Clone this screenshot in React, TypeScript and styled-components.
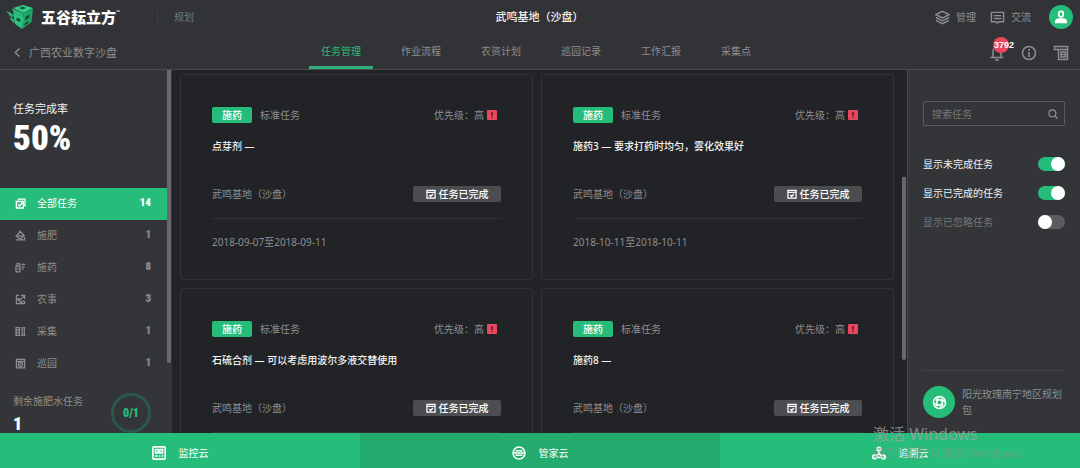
import React from "react";
import styled, { createGlobalStyle } from "styled-components";

const color = {
  panel: "#343538",
  header: "#323336",
  canvas: "#222326",
  line: "#4b4c4f",
  faint: "#313235",
  muted: "#8d8e90",
  dim: "#77787a",
  green: "#25bd79",
  red: "#e8475f",
};

const numberFont = 'Impact, "Roboto Condensed", Roboto, sans-serif';

const GlobalStyle = createGlobalStyle`
  * { box-sizing: border-box; }
  body {
    margin: 0;
    background: ${color.canvas};
    color: ${color.muted};
    font: 10px/16px "Noto Sans", "Noto Sans CJK SC", sans-serif;
  }
  button, input { font: inherit; color: inherit; }
  button { border: 0; padding: 0; background: none; cursor: pointer; }
  a { color: inherit; text-decoration: none; }
  h1, h2, p, ul { margin: 0; padding: 0; font: inherit; }
  svg { display: block; flex: none; }
`;

const Page = styled.div`
  display: flex;
  flex-direction: column;
  height: 100vh;
  overflow: hidden;
  position: relative;
`;

const Header = styled.header`
  background: ${color.header};
  border-bottom: 1px solid ${color.line};
`;

const TopBar = styled.div`
  display: grid;
  grid-template-columns: 1fr auto 1fr;
  align-items: center;
  height: 34px;
  padding: 0 7px 0 6px;
`;

const Brand = styled.div`
  display: flex;
  align-items: center;
`;

const BrandName = styled.span`
  margin-left: 7px;
  color: #fff;
  font-size: 15px;
  font-weight: 900;
  line-height: 24px;
`;

const Trademark = styled.sup`
  align-self: flex-start;
  margin-top: 3px;
  color: #fff;
  font-size: 5px;
  line-height: 8px;
`;

const BrandLink = styled.a`
  margin-left: 37px;
  padding-left: 16px;
  border-left: 1px solid #3d3e41;
  color: ${color.dim};
  line-height: 12px;
`;

const PageTitle = styled.h1`
  color: #f2f2f2;
  font-size: 11px;
  font-weight: 500;
`;

const TopActions = styled.div`
  display: flex;
  align-items: center;
  justify-content: flex-end;
  gap: 14px;
`;

const IconText = styled.button`
  display: flex;
  align-items: center;
  gap: 6px;
`;

const Avatar = styled.button`
  display: grid;
  place-items: center;
  width: 24px;
  height: 24px;
  margin-left: 4px;
  border-radius: 50%;
  background: ${color.green};
`;

const SubBar = styled.div`
  display: grid;
  grid-template-columns: 1fr auto 1fr;
  height: 35px;
  padding: 0 11px;
`;

const BackLink = styled.a`
  display: flex;
  align-items: center;
  gap: 7px;
  padding: 2px 0 0 2px;
  font-size: 11px;
`;

const Tabs = styled.nav`
  display: flex;
  gap: 16px;
  margin-right: 8px;
`;

const Tab = styled.button<{ $active?: boolean }>`
  padding: 2px 12px 0;
  border-bottom: 3px solid ${(p) => (p.$active ? "#2fae7c" : "transparent")};
  color: ${(p) => (p.$active ? color.green : color.muted)};
`;

const Tools = styled.div`
  display: flex;
  align-items: center;
  justify-content: flex-end;
  gap: 16px;
  padding-top: 2px;
`;

const Tool = styled.button`
  position: relative;
`;

const Count = styled.span`
  position: absolute;
  top: -8px;
  left: 4px;
  width: 16px;
  height: 16px;
  padding-left: 1px;
  border-radius: 50%;
  background: ${color.red};
  color: #fff;
  font: bold 9px/16px "Liberation Sans", sans-serif;
`;

const Body = styled.div`
  display: flex;
  flex: 1;
  min-height: 0;
`;

const Sidebar = styled.aside`
  display: flex;
  flex: none;
  width: 172px;
  background: ${color.panel};
`;

const SideContent = styled.div`
  flex: 1;
  overflow: hidden;
`;

const ScrollTrack = styled.div<{ $top: number; $size: number }>`
  flex: none;
  width: 4px;
  margin-right: 1px;
  padding-top: ${(p) => p.$top}px;
  &::before {
    content: "";
    display: block;
    height: ${(p) => p.$size}px;
    border-radius: 0 0 2px 2px;
    background: #68696c;
  }
`;

const Rate = styled.section`
  padding: 31px 13px 31px;
  color: #f2f2f2;
  font-size: 11px;
`;

const RateValue = styled.p`
  padding-top: 4px;
  color: #fff;
  font: 900 35px/36px ${numberFont};
`;

const TaskType = styled.button<{ $active?: boolean }>`
  display: flex;
  align-items: center;
  gap: 11px;
  width: 100%;
  height: 32px;
  padding: 0 16px 2px 15px;
  background: ${(p) => (p.$active ? color.green : "transparent")};
  color: ${(p) => (p.$active ? "#fff" : color.muted)};
`;

const TypeCount = styled.span`
  margin-left: auto;
  font: 900 11px/16px ${numberFont};
`;

const Remaining = styled.section`
  display: flex;
  justify-content: space-between;
  padding: 13px 16px 0 13px;
`;

const RemainingValue = styled.p`
  margin-top: 3px;
  color: #fff;
  font: 900 18px/24px ${numberFont};
`;

const Ring = styled.div`
  display: grid;
  place-items: center;
  width: 40px;
  height: 40px;
  border: 3px solid #29584a;
  border-radius: 50%;
  color: ${color.green};
  font: 900 12px/16px ${numberFont};
`;

const Main = styled.main`
  display: flex;
  flex: 1;
  min-width: 0;
  overflow: hidden;
`;

const Cards = styled.div`
  display: grid;
  flex: 1;
  grid-template-columns: 1fr 1fr;
  align-content: start;
  gap: 8px;
  padding: 4px 8px;
`;

const Card = styled.article`
  padding: 32px 31px 29px;
  border: 1px solid ${color.faint};
  border-radius: 3px;
`;

const CardRow = styled.div`
  display: flex;
  align-items: center;
  height: 16px;
`;

const Badge = styled.span`
  width: 40px;
  margin-right: 8px;
  border-radius: 2px;
  background: ${color.green};
  color: #fff;
  font-weight: 500;
  text-align: center;
`;

const Priority = styled.span`
  display: flex;
  align-items: center;
  gap: 3px;
  margin-left: auto;
  padding-right: 4px;
`;

const CardTitle = styled.h2`
  margin: 15px 0 32px;
  color: #f4f4f4;
  font-weight: 500;
`;

const DoneButton = styled.button`
  display: flex;
  align-items: center;
  justify-content: center;
  gap: 3px;
  width: 88px;
  height: 16px;
  margin-left: auto;
  border-radius: 2px;
  background: #4c4d50;
  color: #fff;
  font-weight: 500;
`;

const Period = styled.p`
  margin-top: 16px;
  padding-top: 15px;
  border-top: 1px solid ${color.faint};
`;

const Filters = styled.aside`
  display: flex;
  flex: none;
  flex-direction: column;
  width: 173px;
  padding: 31px 15px 15px;
  border-left: 1px solid ${color.line};
  background: ${color.panel};
`;

const Search = styled.label`
  display: flex;
  align-items: center;
  height: 25px;
  margin-bottom: 23px;
  padding: 0 6px 0 8px;
  border: 1px solid #5a5b5e;
  border-radius: 2px;
`;

const SearchInput = styled.input`
  flex: 1;
  min-width: 0;
  padding: 0;
  border: 0;
  outline: 0;
  background: none;
  &::placeholder { color: ${color.dim}; }
`;

const Option = styled.label`
  display: flex;
  align-items: center;
  justify-content: space-between;
  height: 29px;
  color: ${color.dim};
  &:has(:checked) { color: #f2f2f2; }
`;

const Toggle = styled.input`
  appearance: none;
  display: flex;
  width: 27px;
  height: 14px;
  margin: 0;
  border-radius: 7px;
  background: #5b5c5f;
  &::before {
    content: "";
    width: 14px;
    height: 14px;
    border-radius: 50%;
    background: #fff;
  }
  &:checked {
    justify-content: flex-end;
    background: ${color.green};
  }
`;

const Plan = styled.a`
  display: flex;
  align-items: center;
  gap: 7px;
  margin-top: auto;
  padding-top: 15px;
  border-top: 1px solid #434447;
`;

const PlanIcon = styled.span`
  display: grid;
  flex: none;
  place-items: center;
  width: 32px;
  height: 32px;
  border-radius: 50%;
  background: ${color.green};
`;

const BottomNav = styled.nav`
  display: flex;
  flex: none;
  height: 35px;
`;

const NavItem = styled.a<{ $active?: boolean }>`
  display: flex;
  flex: 1;
  align-items: center;
  justify-content: center;
  gap: 13px;
  padding-top: 4px;
  background: ${(p) => (p.$active ? "#24ac6e" : color.green)};
  color: #fff;
`;

const Watermark = styled.div`
  position: absolute;
  right: 42px;
  bottom: 6px;
  width: 165px;
  color: rgba(130, 150, 140, 0.6);
  font-size: 12px;
  line-height: 16px;
  white-space: nowrap;
  pointer-events: none;
`;

const WatermarkTitle = styled.p`
  color: rgba(160, 162, 164, 0.75);
  font-size: 16px;
  line-height: 24px;
`;

type IconProps = { size?: number; width?: number; stroke?: string; children: React.ReactNode };

function Icon({ size = 10, width = 1.5, stroke = "currentColor", children }: IconProps) {
  return (
    <svg width={size} height={size} viewBox="0 0 16 16" fill="none" stroke={stroke} strokeWidth={width} aria-hidden="true">
      {children}
    </svg>
  );
}

function Logo() {
  return (
    <svg width="28" height="25" viewBox="0 0 28 25" aria-hidden="true">
      <path d="M7 3 17 0l10 3-9 5z" fill="#2fd189" />
      <path d="M6 3.500 17.500 8v4L8 9z" fill="#27b777" />
      <path d="M17.500 8.500 27 3.500 25.500 17 16 24z" fill="#1fa667" />
      <path d="M7 8l10.500 4L16 24l-7-5z" fill="#2ac47f" />
      <path d="M0 6l5 2 3 3-3 1 4 4-1 2-4-4 1-2z" fill="#27b777" />
      <path d="M13 3l4-1.500 3 1.500-3.500 1.500zM19.500 12l4-3-.5 4-4 2.500zM10.500 12.500l4 1.500v3l-4-1.500zM18.500 18.500l4-3-.5 3-3.500 2.500z" fill="#1b4b38" />
    </svg>
  );
}

const typeIcons: Record<string, React.ReactNode> = {
  all: (
    <>
      <path d="M5 4V1.500h9.500V11H12" />
      <path d="M2 5h10v9.500H2zM4.500 9.500l2 2 4-4.500" strokeWidth="2" />
    </>
  ),
  fertilize: (
    <>
      <path d="M1.500 9 8 2.500 13.500 8 8 13zM4 8.500h8M6 1l3 3" />
      <path d="M14 10v3M1 14.500h14" />
    </>
  ),
  spray: (
    <>
      <path d="M1.500 6H7v8.500H1.500zM3 6V2.500h4M7 2.500V6M3.500 10h2" />
      <path d="M9.500 3.500H15M9.500 7H14M9.500 10.500h3" />
    </>
  ),
  farm: (
    <>
      <path d="M6 2H2v12h12v-4M9 2h5v5" />
      <path d="M14 2 6 10M2 6l8 8M5 6l2 2M9 12l4-2" />
    </>
  ),
  collect: <path d="M1.500 2.500h5v11h-5zM1.500 6h5M1.500 10h5M9 2.500h1.500v11H9M12 2.500h3M13.500 2.500v11M12 13.500h3" />,
  patrol: (
    <>
      <path d="M2 2h12v12.500H2zM2 5h12" />
      <circle cx="8" cy="9.500" r="3" />
      <path d="M8 8v2" />
    </>
  ),
};

const taskTypes = [
  { icon: "all", label: "全部任务", count: 14, active: true },
  { icon: "fertilize", label: "施肥", count: 1 },
  { icon: "spray", label: "施药", count: 8 },
  { icon: "farm", label: "农事", count: 3 },
  { icon: "collect", label: "采集", count: 1 },
  { icon: "patrol", label: "巡园", count: 1 },
];

const tabs = ["任务管理", "作业流程", "农资计划", "巡园记录", "工作汇报", "采集点"];

const tasks = [
  { title: "点芽剂 —", period: "2018-09-07至2018-09-11" },
  { title: "施药3 — 要求打药时均匀，雾化效果好", period: "2018-10-11至2018-10-11" },
  { title: "石硫合剂 — 可以考虑用波尔多液交替使用", period: "2018-09-07至2018-09-11" },
  { title: "施药8 —", period: "2018-10-11至2018-10-11" },
];

function TaskCard({ title, period }: { title: string; period: string }) {
  return (
    <Card>
      <CardRow>
        <Badge>施药</Badge>
        <span>标准任务</span>
        <Priority>
          优先级：高
          <svg width="10" height="10" viewBox="0 0 10 10" aria-hidden="true">
            <rect width="10" height="10" rx="1" fill={color.red} />
            <path d="M5 2v4M5 7v1" stroke="#4a1720" strokeWidth="1.400" />
          </svg>
        </Priority>
      </CardRow>
      <CardTitle>{title}</CardTitle>
      <CardRow>
        <span>武鸣基地（沙盘）</span>
        <DoneButton>
          <Icon size={10} width={2}>
            <path d="M1.500 2h13v12.500h-13zM1.500 5.500h13M5 9.500l2.500 2.500L11 8" />
          </Icon>
          任务已完成
        </DoneButton>
      </CardRow>
      <Period>{period}</Period>
    </Card>
  );
}

export default function App() {
  return (
    <Page>
      <GlobalStyle />
      <Header>
        <TopBar>
          <Brand>
            <Logo />
            <BrandName>五谷耘立方</BrandName>
            <Trademark>™</Trademark>
            <BrandLink href="#plan">规划</BrandLink>
          </Brand>
          <PageTitle>武鸣基地（沙盘）</PageTitle>
          <TopActions>
            <IconText>
              <Icon size={15}>
                <path d="M8 1.500 15 5 8 8.500 1 5zM1 8l7 3.500L15 8M1 11l7 3.500 7-3.500" />
              </Icon>
              管理
            </IconText>
            <IconText>
              <Icon size={15}>
                <path d="M1.500 2.500h13v10H9.500L8 14l-1.500-1.500h-5zM4 6h8M4 9h8" />
              </Icon>
              交流
            </IconText>
            <Avatar aria-label="用户">
              <Icon size={14} stroke="#fff" width={2}>
                <rect x="5.500" y="1.500" width="5" height="6.500" rx="2.500" />
                <path d="M2 14c0-2.500 2-3.500 4-3.500h4c2 0 4 1 4 3.500z" fill="#fff" />
              </Icon>
            </Avatar>
          </TopActions>
        </TopBar>
        <SubBar>
          <BackLink href="#back">
            <Icon size={9} width={2.5}>
              <path d="M11.500 1 4 8l7.500 7" />
            </Icon>
            广西农业数字沙盘
          </BackLink>
          <Tabs>
            {tabs.map((tab, i) => (
              <Tab key={tab} $active={i === 0}>
                {tab}
              </Tab>
            ))}
          </Tabs>
          <Tools>
            <Tool aria-label="通知">
              <Icon size={16}>
                <path d="M4 12V6.500a4 4 0 0 1 8 0V12M1.500 12.500h13M6 15h4" />
              </Icon>
              <Count>3792</Count>
            </Tool>
            <Tool aria-label="信息">
              <Icon size={16}>
                <circle cx="8" cy="8" r="6.500" />
                <path d="M8 4v2M8 7v5" />
              </Icon>
            </Tool>
            <Tool aria-label="文档">
              <Icon size={16}>
                <path d="M5.500 4.500h-4v-3h13v13h-9zM5.500 4.500h9M8 7h4.500v5H8zM8 9.500h4" />
              </Icon>
            </Tool>
          </Tools>
        </SubBar>
      </Header>

      <Body>
        <Sidebar>
          <SideContent>
            <Rate>
              任务完成率
              <RateValue>50%</RateValue>
            </Rate>
            {taskTypes.map((type) => (
              <TaskType key={type.label} $active={type.active}>
                <Icon size={11} width={1.8}>
                  {typeIcons[type.icon]}
                </Icon>
                {type.label}
                <TypeCount>{type.count}</TypeCount>
              </TaskType>
            ))}
            <Remaining>
              <div>
                剩余施肥水任务
                <RemainingValue>1</RemainingValue>
              </div>
              <Ring>0/1</Ring>
            </Remaining>
          </SideContent>
          <ScrollTrack $top={0} $size={293} />
        </Sidebar>

        <Main>
          <Cards>
            {tasks.map((task) => (
              <TaskCard key={task.title} {...task} />
            ))}
          </Cards>
          <ScrollTrack $top={107} $size={183} />
        </Main>

        <Filters>
          <Search>
            <SearchInput type="search" placeholder="搜索任务" aria-label="搜索任务" />
            <Icon size={10} width={2}>
              <circle cx="7" cy="7" r="5.500" />
              <path d="m11 11 4.500 4.500" />
            </Icon>
          </Search>
          <Option>
            显示未完成任务
            <Toggle type="checkbox" defaultChecked />
          </Option>
          <Option>
            显示已完成的任务
            <Toggle type="checkbox" defaultChecked />
          </Option>
          <Option>
            显示已忽略任务
            <Toggle type="checkbox" />
          </Option>
          <Plan href="#region">
            <PlanIcon>
              <Icon size={15} stroke="#fff" width={1.6}>
                <circle cx="8" cy="8" r="6.500" />
                <circle cx="8" cy="8" r="3" />
                <path d="M8 1.500 4 6M14.500 8 10 4M8 14.500l4-4.500M1.500 8 6 12" />
              </Icon>
            </PlanIcon>
            阳光玫瑰南宁地区规划包
          </Plan>
        </Filters>
      </Body>

      <BottomNav>
        <NavItem href="#monitor">
          <Icon size={14} stroke="#fff" width={1.8}>
            <rect x="1" y="1" width="14" height="14" rx="1" />
            <path d="M4 4h3v4H4zM9 4h3v4H9zM3.500 11.500h3M8 11.500h1.500M11 11.500h2" />
          </Icon>
          监控云
        </NavItem>
        <NavItem href="#manager" $active>
          <Icon size={14} stroke="#fff" width={1.8}>
            <circle cx="8" cy="8" r="6.800" />
            <path d="M4 5.500h8M1.500 8h13M4 10.500h8" />
          </Icon>
          管家云
        </NavItem>
        <NavItem href="#trace">
          <Icon size={14} stroke="#fff" width={2}>
            <circle cx="8" cy="3.500" r="2" />
            <circle cx="3" cy="12.500" r="2" />
            <circle cx="13" cy="12.500" r="2" />
            <path d="M8 5.500V9l-3.500 2.500M8 9l3.500 2.500M6 13h4" />
          </Icon>
          追溯云
        </NavItem>
      </BottomNav>

      <Watermark>
        <WatermarkTitle>激活 Windows</WatermarkTitle>
        转到“设置”以激活 Windows。
      </Watermark>
    </Page>
  );
}
